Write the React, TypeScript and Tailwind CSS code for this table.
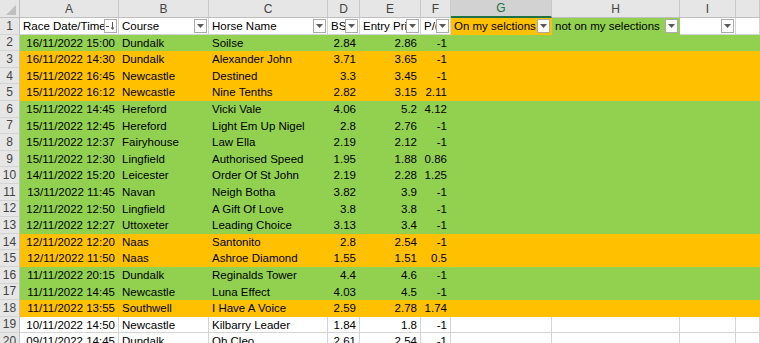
import React from "react";

// column widths (px) for A..J, row header sits in front
const colW = [99, 90, 119, 32, 61, 30, 101, 128, 56, 24];
const letters = ["A", "B", "C", "D", "E", "F", "G", "H", "I", ""];

type Fill = "g" | "o" | "w";

const rows: { d: string; c: string; h: string; bs: string; ep: string; pl: string; f: Fill }[] = [
  { d: "16/11/2022 15:00", c: "Dundalk", h: "Soilse", bs: "2.84", ep: "2.86", pl: "-1", f: "g" },
  { d: "16/11/2022 14:30", c: "Dundalk", h: "Alexander John", bs: "3.71", ep: "3.65", pl: "-1", f: "o" },
  { d: "15/11/2022 16:45", c: "Newcastle", h: "Destined", bs: "3.3", ep: "3.45", pl: "-1", f: "o" },
  { d: "15/11/2022 16:12", c: "Newcastle", h: "Nine Tenths", bs: "2.82", ep: "3.15", pl: "2.11", f: "o" },
  { d: "15/11/2022 14:45", c: "Hereford", h: "Vicki Vale", bs: "4.06", ep: "5.2", pl: "4.12", f: "g" },
  { d: "15/11/2022 12:45", c: "Hereford", h: "Light Em Up Nigel", bs: "2.8", ep: "2.76", pl: "-1", f: "g" },
  { d: "15/11/2022 12:37", c: "Fairyhouse", h: "Law Ella", bs: "2.19", ep: "2.12", pl: "-1", f: "g" },
  { d: "15/11/2022 12:30", c: "Lingfield", h: "Authorised Speed", bs: "1.95", ep: "1.88", pl: "0.86", f: "g" },
  { d: "14/11/2022 15:20", c: "Leicester", h: "Order Of St John", bs: "2.19", ep: "2.28", pl: "1.25", f: "g" },
  { d: "13/11/2022 11:45", c: "Navan", h: "Neigh Botha", bs: "3.82", ep: "3.9", pl: "-1", f: "g" },
  { d: "12/11/2022 12:50", c: "Lingfield", h: "A Gift Of Love", bs: "3.8", ep: "3.8", pl: "-1", f: "g" },
  { d: "12/11/2022 12:27", c: "Uttoxeter", h: "Leading Choice", bs: "3.13", ep: "3.4", pl: "-1", f: "g" },
  { d: "12/11/2022 12:20", c: "Naas", h: "Santonito", bs: "2.8", ep: "2.54", pl: "-1", f: "o" },
  { d: "12/11/2022 11:50", c: "Naas", h: "Ashroe Diamond", bs: "1.55", ep: "1.51", pl: "0.5", f: "o" },
  { d: "11/11/2022 20:15", c: "Dundalk", h: "Reginalds Tower", bs: "4.4", ep: "4.6", pl: "-1", f: "g" },
  { d: "11/11/2022 14:45", c: "Newcastle", h: "Luna Effect", bs: "4.03", ep: "4.5", pl: "-1", f: "g" },
  { d: "11/11/2022 13:55", c: "Southwell", h: "I Have A Voice", bs: "2.59", ep: "2.78", pl: "1.74", f: "o" },
  { d: "10/11/2022 14:50", c: "Newcastle", h: "Kilbarry Leader", bs: "1.84", ep: "1.8", pl: "-1", f: "w" },
  { d: "09/11/2022 14:45", c: "Dundalk", h: "Oh Cleo", bs: "2.61", ep: "2.54", pl: "-1", f: "w" },
];

const fillCls: Record<Fill, string> = {
  g: "bg-[#92d050] border-[#92d050]",
  o: "bg-[#ffc000] border-[#ffc000]",
  w: "bg-white border-[#d4d4d4]",
};

function RowNum({ n }: { n: number }) {
  return (
    <div className="w-[20px] h-[16.6px] shrink-0 bg-[#e6e6e6] border-r border-b border-r-[#bfbfbf] border-b-[#d4d4d4] flex items-center justify-center text-[12px] text-[#444]">
      {n}
    </div>
  );
}

function FilterBtn({ sorted }: { sorted?: boolean }) {
  return (
    <div className="absolute right-[1px] top-[1px] w-[13px] h-[14px] bg-white border border-[#ababab] flex items-center justify-center">
      {sorted ? (
        <svg width="11" height="10" viewBox="0 0 11 10">
          <path d="M1 5.5h3" stroke="#595959" strokeWidth="1" />
          <path d="M7.5 1v7" stroke="#595959" strokeWidth="1" />
          <path d="M5.5 6.5l2 2.5 2-2.5z" fill="#595959" />
        </svg>
      ) : (
        <svg width="7" height="4" viewBox="0 0 7 4">
          <path d="M0 0h7L3.5 4z" fill="#595959" />
        </svg>
      )}
    </div>
  );
}

export default function App() {
  const headerCells: { t: string; bg: string; btn: boolean; sorted?: boolean }[] = [
    { t: "Race Date/Time", bg: "bg-white border-[#d4d4d4]", btn: true, sorted: true },
    { t: "Course", bg: "bg-white border-[#d4d4d4]", btn: true },
    { t: "Horse Name", bg: "bg-white border-[#d4d4d4]", btn: true },
    { t: "BS", bg: "bg-white border-[#d4d4d4]", btn: true },
    { t: "Entry Price", bg: "bg-white border-[#d4d4d4]", btn: true },
    { t: "P/(L)", bg: "bg-white border-[#d4d4d4]", btn: true },
    { t: "On my selctions", bg: "bg-[#ffc000] border-[#ffc000]", btn: true },
    { t: "not on my selections", bg: "bg-[#92d050] border-[#92d050]", btn: true },
    { t: "", bg: "bg-white border-[#d4d4d4]", btn: true },
    { t: "", bg: "bg-white border-[#d4d4d4]", btn: false },
  ];

  return (
    <div
      className="w-[760px] h-[343px] overflow-hidden bg-white text-black select-none"
      style={{ fontFamily: '"Liberation Sans", Arial, sans-serif' }}
    >
      {/* column letters */}
      <div className="flex h-[18px]">
        <div className="w-[20px] shrink-0 bg-[#e6e6e6] border-r border-b border-[#bfbfbf] relative">
          <div className="absolute right-[3px] bottom-[2px] w-0 h-0 border-l-[10px] border-l-transparent border-b-[10px] border-b-[#bfbfbf]" />
        </div>
        {colW.map((w, i) => (
          <div
            key={i}
            style={{ width: w }}
            className={`shrink-0 flex items-center justify-center text-[12px] border-r border-b border-r-[#c8c8c8] ${
              letters[i] === "G"
                ? "bg-[#d2d2d2] text-[#217346] border-b-2 border-b-[#217346]"
                : "bg-[#e6e6e6] text-[#444] border-b-[#bfbfbf]"
            }`}
          >
            {letters[i]}
          </div>
        ))}
      </div>

      {/* row 1: table headers */}
      <div className="flex h-[16.6px]">
        <RowNum n={1} />
        {headerCells.map((c, i) => (
          <div
            key={i}
            style={{ width: colW[i] }}
            className={`shrink-0 relative border-r border-b ${c.bg} overflow-hidden whitespace-nowrap text-[11.5px] leading-[16px] pl-[3px]`}
          >
            {c.t}
            {c.btn && <FilterBtn sorted={c.sorted} />}
          </div>
        ))}
      </div>

      {/* data rows */}
      {rows.map((r, idx) => {
        const cells = [r.d, r.c, r.h, r.bs, r.ep, r.pl, "", "", "", ""];
        const right = [true, false, false, true, true, true, false, false, false, false];
        return (
          <div key={idx} className="flex h-[16.6px]">
            <RowNum n={idx + 2} />
            {cells.map((v, i) => (
              <div
                key={i}
                style={{ width: colW[i] }}
                className={`shrink-0 border-r border-b ${fillCls[r.f]} overflow-hidden whitespace-nowrap text-[11.5px] leading-[16px] ${
                  right[i] ? "text-right pr-[3px]" : "pl-[3px]"
                }`}
              >
                {v}
              </div>
            ))}
          </div>
        );
      })}
    </div>
  );
}
